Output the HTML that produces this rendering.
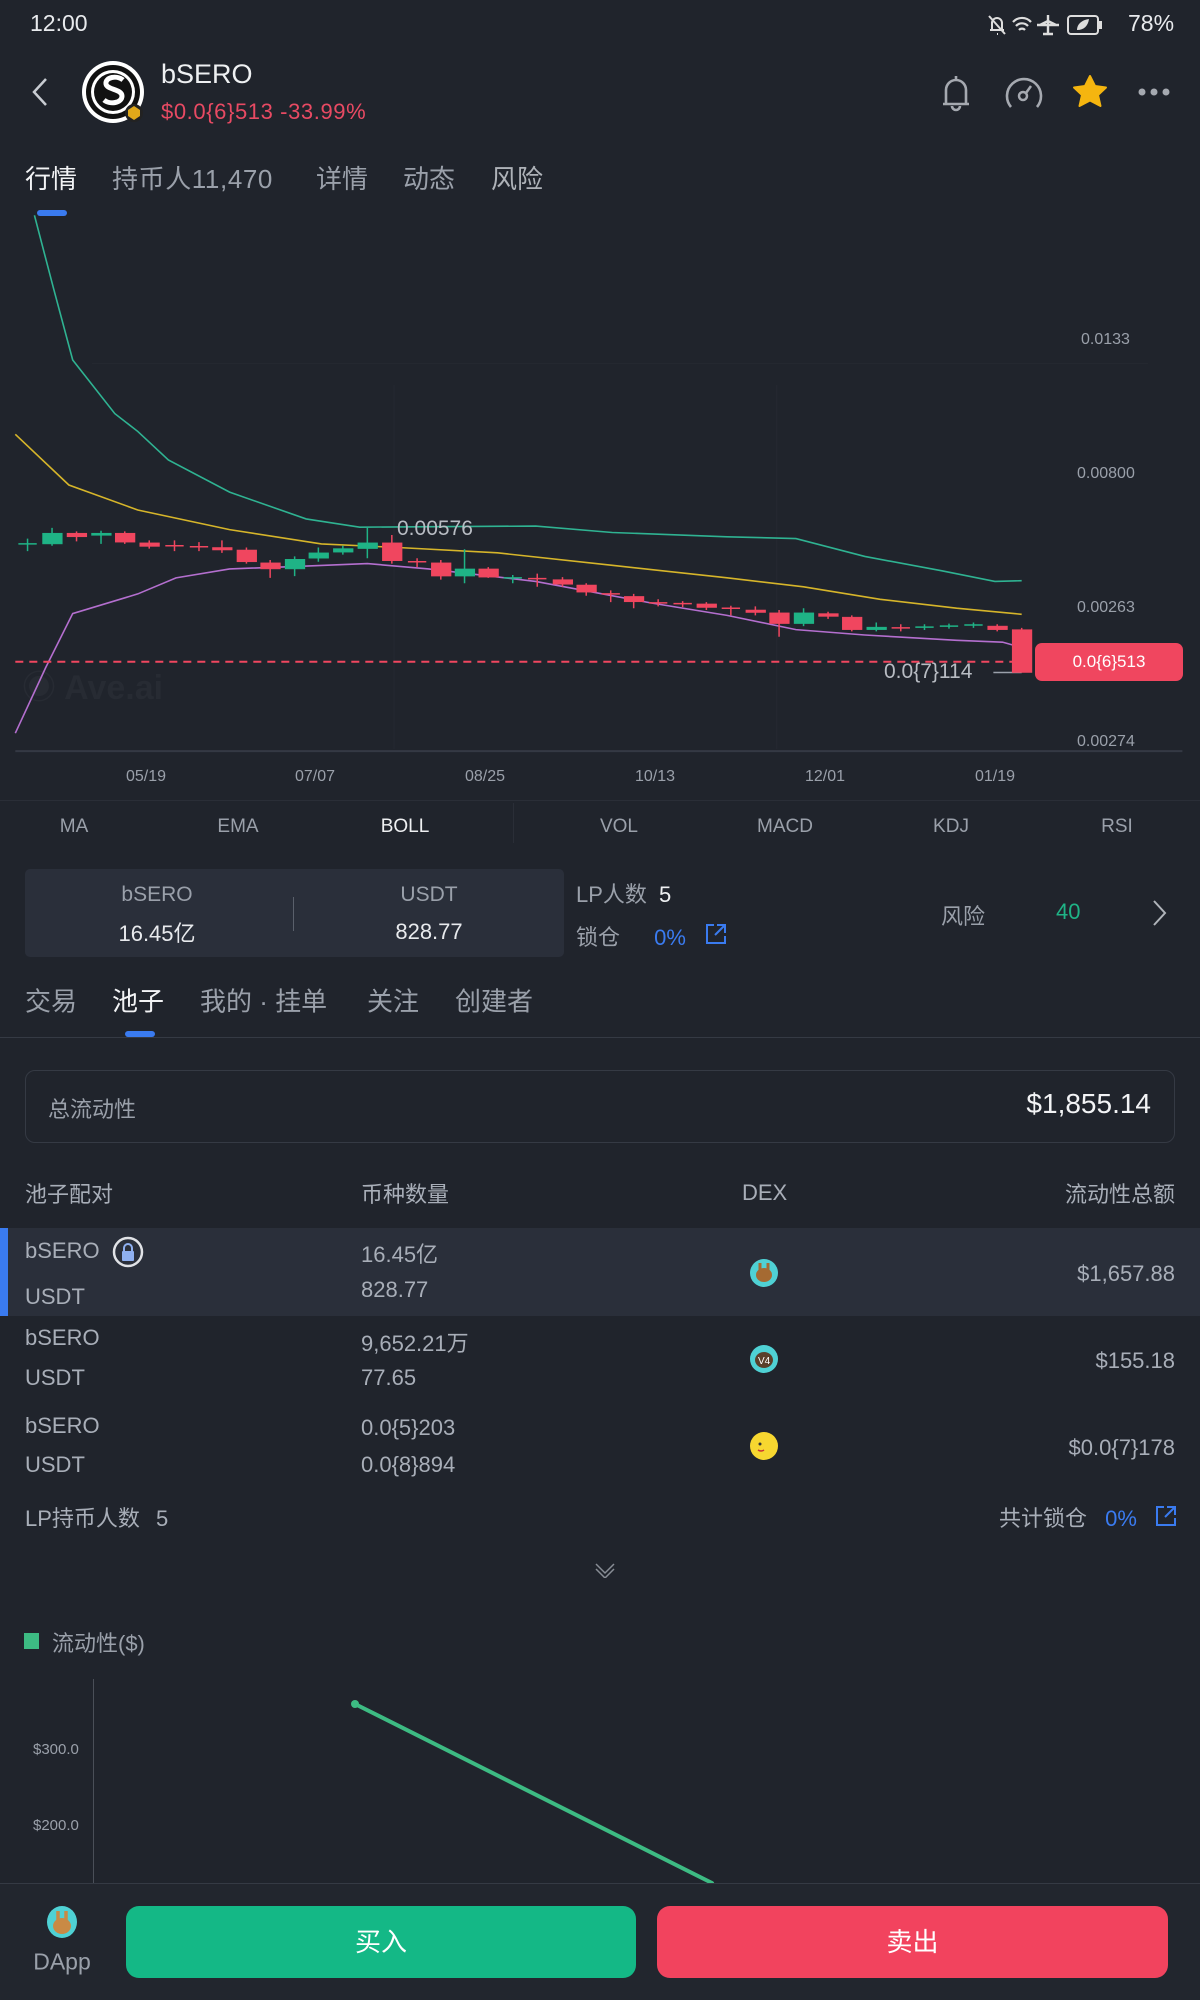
<!DOCTYPE html>
<html><head><meta charset="utf-8">
<style>
*{margin:0;padding:0;box-sizing:border-box}
body{width:1200px;height:2000px;background:#20242c;font-family:"Liberation Sans","Noto Sans CJK SC",sans-serif;color:#e8eaed;position:relative;overflow:hidden}
.a{position:absolute;white-space:nowrap}
.g{color:#9aa0aa}
.lbl{position:absolute;font-size:16px;color:#9aa0aa;transform:translateY(-50%)}
.ind{position:absolute;top:827px;font-size:19px;color:#9aa0aa;transform:translate(-50%,-50%)}
.t2{position:absolute;top:1000px;font-size:26px;color:#9aa0aa;transform:translateY(-50%)}
.tb{font-size:22px;color:#a8aeb8;position:absolute;transform:translateY(-50%)}
.r{right:25px}
</style></head><body>
<!-- status bar -->
<div class="a" style="left:30px;top:10px;font-size:23px;color:#e8eaed">12:00</div>
<svg class="a" style="left:985px;top:12px" width="140" height="26" viewBox="0 0 140 26">
<path d="M5 18h14M7 18v-7a5 5 0 0 1 10 0v7M12 22h1" stroke="#ddd" stroke-width="2" fill="none"/><path d="M4 4l16 18" stroke="#ddd" stroke-width="2"/>
<path d="M28 10a12 12 0 0 1 18 0M31 14a8 8 0 0 1 12 0M34 18a4 4 0 0 1 6 0" stroke="#ddd" stroke-width="2.2" fill="none"/>
<path d="M52 13h22M63 3v20M58 22h10M55 13l8-4 8 4" stroke="#ddd" stroke-width="2.4" fill="none"/>
<rect x="83" y="4" width="30" height="18" rx="3" stroke="#ddd" stroke-width="2" fill="none"/><rect x="114" y="9" width="3" height="8" fill="#ddd"/><path d="M92 18c0-6 5-10 12-11-1 7-5 11-12 11z" fill="#ddd"/>
</svg>
<div class="a" style="left:1128px;top:10px;font-size:23px;color:#e8eaed">78%</div>
<!-- header -->
<svg class="a" style="left:28px;top:76px" width="24" height="32"><path d="M18 3L6 16l12 13" stroke="#c8ccd2" stroke-width="2.5" fill="none"/></svg>
<svg class="a" style="left:80px;top:60px" width="68" height="66" viewBox="0 0 68 66">
<circle cx="33" cy="32" r="31" fill="#fff"/><circle cx="33" cy="32" r="27" fill="#111"/><circle cx="33" cy="32" r="22" fill="#fff"/><circle cx="33" cy="32" r="19" fill="#111"/>
<path d="M43 20c-6-5-18-3-17 4 1 6 16 5 16 12s-12 9-18 4" stroke="#fff" stroke-width="5" fill="none"/>
<circle cx="54" cy="53" r="9" fill="#222"/><path d="M54 46l6 4v6l-6 4-6-4v-6z" fill="#e0a81a"/></svg>
<div class="a" style="left:161px;top:59px;font-size:27px;color:#eef0f2">bSERO</div>
<div class="a" style="left:161px;top:99px;font-size:22px;letter-spacing:0.6px;color:#e84a63">$0.0{6}513 -33.99%</div>
<svg class="a" style="left:935px;top:72px" width="240" height="42" viewBox="0 0 240 42">
<path d="M8 32h26M11 32V18a10 10 0 0 1 20 0v14M17 34a4 4 0 0 0 8 0M21 4v4" stroke="#a5a9b0" stroke-width="2.6" fill="none"/>
<path d="M76 35a17 17 0 1 1 26 0" stroke="#a5a9b0" stroke-width="2.6" fill="none"/><circle cx="88" cy="24" r="4" stroke="#a5a9b0" stroke-width="2.5" fill="none"/><path d="M91 21l5-7" stroke="#a5a9b0" stroke-width="2.5"/>
<path d="M155 4l5 10 11 1.5-8 7.5 2.5 11-10.5-5.5-10.5 5.5 2.5-11-8-7.5 11-1.5z" fill="#f5b50f" stroke="#f5b50f" stroke-width="2" stroke-linejoin="round"/>
<circle cx="207" cy="20" r="3.5" fill="#a5a9b0"/><circle cx="219" cy="20" r="3.5" fill="#a5a9b0"/><circle cx="231" cy="20" r="3.5" fill="#a5a9b0"/></svg>
<!-- tabs -->
<div class="a" style="left:25px;top:159px;font-size:26px;color:#f2f3f5">行情</div>
<div class="a g" style="left:112px;top:159px;font-size:26px;letter-spacing:0.6px">持币人11,470</div>
<div class="a g" style="left:316px;top:159px;font-size:26px">详情</div>
<div class="a g" style="left:403px;top:159px;font-size:26px">动态</div>
<div class="a g" style="left:491px;top:159px;font-size:26px;color:#aeb2b8">风险</div>
<div class="a" style="left:37px;top:210px;width:30px;height:6px;border-radius:3px;background:#3a7bf0"></div>
<!-- chart -->
<div class="a" style="left:22px;top:660px;font-size:34px;color:#272b33;font-weight:bold">◉ Ave.ai</div>
<svg class="a" style="left:0;top:210px" width="1200" height="560" viewBox="0 0 1568 1568" preserveAspectRatio="none">
<g stroke="#252931" stroke-width="1">
<line x1="120" y1="430" x2="1500" y2="430" vector-effect="non-scaling-stroke"/><line x1="515" y1="490" x2="515" y2="1510" vector-effect="non-scaling-stroke"/><line x1="1015" y1="490" x2="1015" y2="1510" vector-effect="non-scaling-stroke"/>
</g>
<line x1="20" y1="1515" x2="1545" y2="1515" stroke="#343944" stroke-width="2" vector-effect="non-scaling-stroke"/>
<g fill="none" stroke-width="1.6">
<path vector-effect="non-scaling-stroke" stroke="#2fb392" d="M45 15L70 220 95 420 150 570 180 620 220 700 300 790 400 865 470 888 700 885 800 903 950 915 1040 920 1130 970 1230 1010 1300 1040 1335 1038"/>
<path vector-effect="non-scaling-stroke" stroke="#d6b52a" d="M20 628L90 770 180 840 300 895 420 935 520 945 650 960 800 995 950 1030 1050 1055 1150 1090 1250 1115 1335 1132"/>
<path vector-effect="non-scaling-stroke" stroke="#b46fcf" d="M20 1465L60 1280 95 1130 180 1075 230 1030 300 1005 400 997 480 990 560 1005 700 1040 850 1100 950 1135 1040 1175 1130 1190 1250 1205 1310 1210 1335 1225"/>
<path vector-effect="non-scaling-stroke" stroke="#f0465f" stroke-dasharray="8 6" stroke-width="2" d="M20 1265H1340"/>
<path vector-effect="non-scaling-stroke" stroke="#9aa0aa" d="M1298 1295H1335"/>
</g>
<g stroke-width="1.5">
<g stroke="#1fb386" fill="#1fb386">
<path vector-effect="non-scaling-stroke" d="M36 920V955M24 935H48M68 890V940M132 898V935M385 970V1025M416 945V985M448 940V965M480 890V975M607 950V1045M670 1022V1045M1050 1115V1165M1145 1155V1180M1208 1160V1176M1240 1158V1172M1272 1155V1170M658 1030H682M1196 1168H1220M1228 1165H1252M1260 1162H1284"/>
<rect x="56" y="905" width="25" height="30"/><rect x="120" y="905" width="25" height="6"/><rect x="373" y="978" width="25" height="27"/><rect x="404" y="960" width="25" height="15"/><rect x="436" y="948" width="25" height="10"/><rect x="468" y="932" width="25" height="16"/><rect x="595" y="1005" width="25" height="20"/><rect x="1038" y="1128" width="25" height="30"/><rect x="1133" y="1168" width="25" height="7"/>
</g>
<g stroke="#f0465f" fill="#f0465f">
<path vector-effect="non-scaling-stroke" d="M100 900V928M163 900V935M195 925V948M228 925V955M216 940H240M260 930V955M248 943H272M290 925V960M322 945V990M353 980V1030M512 910V990M545 975V1000M533 985H557M576 980V1035M638 1000V1030M702 1018V1055M690 1032H714M735 1028V1055M766 1045V1080M798 1065V1098M786 1075H810M828 1075V1115M860 1090V1110M848 1100H872M892 1095V1112M880 1102H904M923 1098V1120M955 1108V1135M943 1115H967M987 1110V1135M1018 1120V1195M1082 1125V1145M1113 1135V1180M1177 1160V1180M1165 1170H1189M1303 1160V1180M1335 1170V1295"/>
<rect x="88" y="905" width="25" height="10"/><rect x="151" y="905" width="25" height="25"/><rect x="183" y="932" width="25" height="10"/><rect x="278" y="945" width="25" height="7"/><rect x="310" y="952" width="25" height="33"/><rect x="341" y="988" width="25" height="17"/><rect x="500" y="932" width="25" height="50"/><rect x="564" y="988" width="25" height="37"/><rect x="626" y="1005" width="25" height="23"/><rect x="723" y="1035" width="25" height="13"/><rect x="754" y="1050" width="25" height="20"/><rect x="816" y="1082" width="25" height="15"/><rect x="911" y="1103" width="25" height="10"/><rect x="975" y="1120" width="25" height="7"/><rect x="1006" y="1128" width="25" height="30"/><rect x="1070" y="1130" width="25" height="8"/><rect x="1101" y="1140" width="25" height="35"/><rect x="1291" y="1165" width="25" height="10"/><rect x="1323" y="1175" width="25" height="120"/>
</g></g>
</svg>
<div class="lbl" style="left:1081px;top:340px">0.0133</div>
<div class="lbl" style="left:1077px;top:474px">0.00800</div>
<div class="lbl" style="left:1077px;top:608px">0.00263</div>
<div class="lbl" style="left:1077px;top:742px">0.00274</div>
<div class="a" style="left:397px;top:517px;font-size:21px;color:#b8bcc3">0.00576</div>
<div class="a" style="left:884px;top:660px;font-size:21px;color:#b8bcc3">0.0{7}114</div>
<div class="a" style="left:1035px;top:643px;width:148px;height:38px;border-radius:7px;background:#f0465f;color:#fff;font-size:17px;text-align:center;line-height:38px">0.0{6}513</div>
<div class="lbl" style="left:126px;top:777px">05/19</div>
<div class="lbl" style="left:295px;top:777px">07/07</div>
<div class="lbl" style="left:465px;top:777px">08/25</div>
<div class="lbl" style="left:635px;top:777px">10/13</div>
<div class="lbl" style="left:805px;top:777px">12/01</div>
<div class="lbl" style="left:975px;top:777px">01/19</div>
<div class="a" style="left:0;top:800px;width:1200px;height:1px;background:#2a2e37"></div>
<div class="a" style="left:513px;top:803px;width:1px;height:40px;background:#2a2e37"></div>
<div class="ind" style="left:74px">MA</div><div class="ind" style="left:238px">EMA</div><div class="ind" style="left:405px;color:#eef0f2">BOLL</div><div class="ind" style="left:619px">VOL</div><div class="ind" style="left:785px">MACD</div><div class="ind" style="left:951px">KDJ</div><div class="ind" style="left:1117px">RSI</div>
<!-- info box -->
<div class="a" style="left:25px;top:869px;width:539px;height:88px;background:#2a2f3a;border-radius:5px"></div>
<div class="a g" style="left:157px;top:895px;transform:translate(-50%,-50%);font-size:21px">bSERO</div>
<div class="a" style="left:157px;top:932px;transform:translate(-50%,-50%);font-size:22px">16.45亿</div>
<div class="a" style="left:293px;top:897px;width:1px;height:34px;background:#5a606b"></div>
<div class="a g" style="left:429px;top:895px;transform:translate(-50%,-50%);font-size:21px">USDT</div>
<div class="a" style="left:429px;top:932px;transform:translate(-50%,-50%);font-size:22px">828.77</div>
<div class="a g" style="left:576px;top:877px;font-size:22px">LP人数 <span style="color:#eef0f2;margin-left:6px">5</span></div>
<div class="a g" style="left:576px;top:920px;font-size:22px">锁仓 <span style="color:#3a7bf0;margin-left:28px">0%</span></div>
<svg class="a" style="left:704px;top:922px" width="24" height="24"><path d="M10 3H3v18h18v-7M13 3h8v8M21 3L11 13" stroke="#3a7bf0" stroke-width="2" fill="none"/></svg>
<div class="a g" style="left:941px;top:899px;font-size:22px">风险</div>
<div class="a" style="left:1056px;top:899px;font-size:22px;color:#1fb386">40</div>
<svg class="a" style="left:1150px;top:898px" width="20" height="30"><path d="M4 3l11 12L4 27" stroke="#b0b4ba" stroke-width="2" fill="none"/></svg>
<!-- tabs 2 -->
<div class="t2" style="left:25px">交易</div><div class="t2" style="left:112px;color:#f2f3f5">池子</div><div class="t2" style="left:200px">我的 · 挂单</div><div class="t2" style="left:367px">关注</div><div class="t2" style="left:455px">创建者</div>
<div class="a" style="left:125px;top:1031px;width:30px;height:6px;border-radius:3px;background:#3a7bf0"></div>
<div class="a" style="left:0;top:1037px;width:1200px;height:1px;background:#353a44"></div>
<div class="a" style="left:25px;top:1070px;width:1150px;height:73px;border:1px solid #353a44;border-radius:10px"></div>
<div class="a g" style="left:48px;top:1092px;font-size:22px">总流动性</div>
<div class="a" style="right:49px;top:1088px;font-size:28px;color:#f2f3f5">$1,855.14</div>
<!-- table -->
<div class="tb" style="left:25px;top:1193px">池子配对</div><div class="tb" style="left:361px;top:1193px">币种数量</div><div class="tb" style="left:742px;top:1193px">DEX</div><div class="tb r" style="top:1193px">流动性总额</div>
<div class="a" style="left:0;top:1228px;width:1200px;height:88px;background:#2a2f3a"></div>
<div class="a" style="left:0;top:1228px;width:8px;height:88px;background:#3a7bf0"></div>
<div class="tb" style="left:25px;top:1251px">bSERO</div>
<svg class="a" style="left:111px;top:1235px" width="34" height="34"><circle cx="17" cy="17" r="14" stroke="#e0e2e6" stroke-width="2.5" fill="#2a2f3a"/><rect x="11" y="16" width="12" height="10" rx="1" fill="#8fb0f0"/><path d="M13 16v-3a4 4 0 0 1 8 0v3" stroke="#8fb0f0" stroke-width="2" fill="none"/></svg>
<div class="tb" style="left:25px;top:1297px">USDT</div>
<div class="tb" style="left:361px;top:1253px">16.45亿</div><div class="tb" style="left:361px;top:1290px">828.77</div>
<div class="tb r" style="top:1274px">$1,657.88</div>
<div class="tb" style="left:25px;top:1338px">bSERO</div><div class="tb" style="left:25px;top:1378px">USDT</div>
<div class="tb" style="left:361px;top:1342px">9,652.21万</div><div class="tb" style="left:361px;top:1378px">77.65</div>
<div class="tb r" style="top:1361px">$155.18</div>
<div class="tb" style="left:25px;top:1426px">bSERO</div><div class="tb" style="left:25px;top:1465px">USDT</div>
<div class="tb" style="left:361px;top:1428px">0.0{5}203</div><div class="tb" style="left:361px;top:1465px">0.0{8}894</div>
<div class="tb r" style="top:1448px">$0.0{7}178</div>
<svg class="a" style="left:749px;top:1258px" width="30" height="30"><circle cx="15" cy="15" r="14" fill="#4fd1d4"/><ellipse cx="15" cy="17" rx="8" ry="7" fill="#a56a32"/><path d="M11 12V5M19 12V5" stroke="#a56a32" stroke-width="3"/></svg>
<svg class="a" style="left:749px;top:1344px" width="30" height="30"><circle cx="15" cy="15" r="14" fill="#4fd1d4"/><ellipse cx="15" cy="16" rx="9" ry="8" fill="#5a3f2a"/><text x="9" y="20" font-size="10" fill="#fff" font-family="Liberation Sans">V4</text></svg>
<svg class="a" style="left:749px;top:1431px" width="30" height="30"><circle cx="15" cy="15" r="14" fill="#f7d730"/><circle cx="11" cy="13" r="1.5" fill="#333"/><path d="M9 19q3 2 6 0" stroke="#c33" stroke-width="1.5" fill="none"/></svg>
<div class="tb" style="left:25px;top:1517px">LP持币人数 <span style="margin-left:10px">5</span></div>
<div class="tb" style="left:999px;top:1517px">共计锁仓 <span style="color:#3a7bf0;margin-left:12px">0%</span></div>
<svg class="a" style="left:1154px;top:1504px" width="24" height="24"><path d="M10 3H3v18h18v-7M13 3h8v8M21 3L11 13" stroke="#3a7bf0" stroke-width="2" fill="none"/></svg>
<svg class="a" style="left:594px;top:1562px" width="22" height="16"><path d="M2 2l9 9 9-9M2 7l9 9 9-9" stroke="#888d95" stroke-width="1.5" fill="none"/></svg>
<!-- liquidity chart -->
<div class="a" style="left:24px;top:1633px;width:15px;height:16px;background:#3dbb83"></div>
<div class="a g" style="left:52px;top:1626px;font-size:22px">流动性($)</div>
<div class="a" style="left:93px;top:1679px;width:1px;height:204px;background:#4a4f58"></div>
<div class="a g" style="left:33px;top:1741px;font-size:15px">$300.0</div>
<div class="a g" style="left:33px;top:1817px;font-size:15px">$200.0</div>
<svg class="a" style="left:0;top:1690px" width="1200" height="200"><path d="M355 14L712 193" stroke="#3dbb83" stroke-width="4" stroke-linecap="round"/><circle cx="355" cy="14" r="4" fill="#3dbb83"/></svg>
<!-- bottom bar -->
<div class="a" style="left:0;top:1883px;width:1200px;height:117px;background:#22262e;border-top:1px solid #353a44"></div>
<svg class="a" style="left:46px;top:1905px" width="32" height="34"><ellipse cx="16" cy="17" rx="15" ry="16" fill="#4fd1d4"/><ellipse cx="16" cy="21" rx="9" ry="8" fill="#c98a45"/><path d="M12 15V6M20 15V6" stroke="#c98a45" stroke-width="3.5"/></svg>
<div class="a g" style="left:62px;top:1962px;transform:translate(-50%,-50%);font-size:23px">DApp</div>
<div class="a" style="left:126px;top:1906px;width:510px;height:72px;border-radius:13px;background:#14b886;color:#fff;font-size:26px;text-align:center;line-height:72px">买入</div>
<div class="a" style="left:657px;top:1906px;width:511px;height:72px;border-radius:13px;background:#f2435e;color:#fff;font-size:26px;text-align:center;line-height:72px">卖出</div>
</body></html>
